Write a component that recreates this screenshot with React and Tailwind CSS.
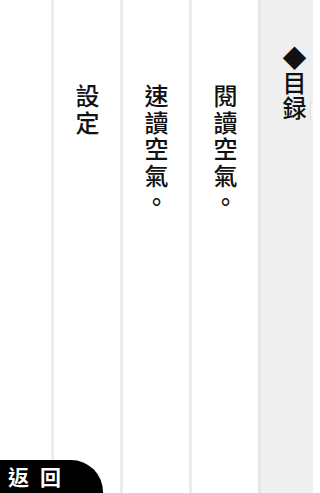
export default function App() {
  const font = { fontFamily: '"Noto Sans CJK TC", "Noto Sans CJK SC", sans-serif' };
  const columns = ['設定', '速讀空氣。', '閱讀空氣。'];

  return (
    <div
      className="relative flex h-[493px] w-[313px] overflow-hidden bg-white text-[#111]"
      style={font}
    >
      {/* blank first column */}
      <div className="w-[51px] shrink-0 bg-white" />

      {/* menu columns */}
      {columns.map((label) => (
        <div
          key={label}
          className="flex w-[69px] shrink-0 justify-center border-l-[3px] border-[#ececec] bg-white pt-[84px]"
        >
          <span className="text-[24px] font-medium leading-none tracking-[2.5px] [writing-mode:vertical-rl] [text-orientation:upright]">
            {label}
          </span>
        </div>
      ))}

      {/* contents panel */}
      <div className="relative flex flex-1 border-l-[3px] border-[#e6e6e6] bg-[#efefef] pl-[21px] pt-[46px]">
        <span className="text-[24px] font-medium leading-none tracking-[1px] [writing-mode:vertical-rl] [text-orientation:upright]">
          ◆目録
        </span>
        <div className="absolute right-[-7px] top-[100px] h-[22px] w-[10px] rounded-[4px] border border-[#dcdcdc] bg-[#f6f6f6]" />
      </div>

      {/* back button */}
      <div className="absolute bottom-0 left-0 flex h-[33px] w-[103px] items-center rounded-tr-[32px] bg-black pl-[8px]">
        <span className="text-[21px] font-bold leading-none tracking-[11px] text-white">返回</span>
      </div>
    </div>
  );
}
